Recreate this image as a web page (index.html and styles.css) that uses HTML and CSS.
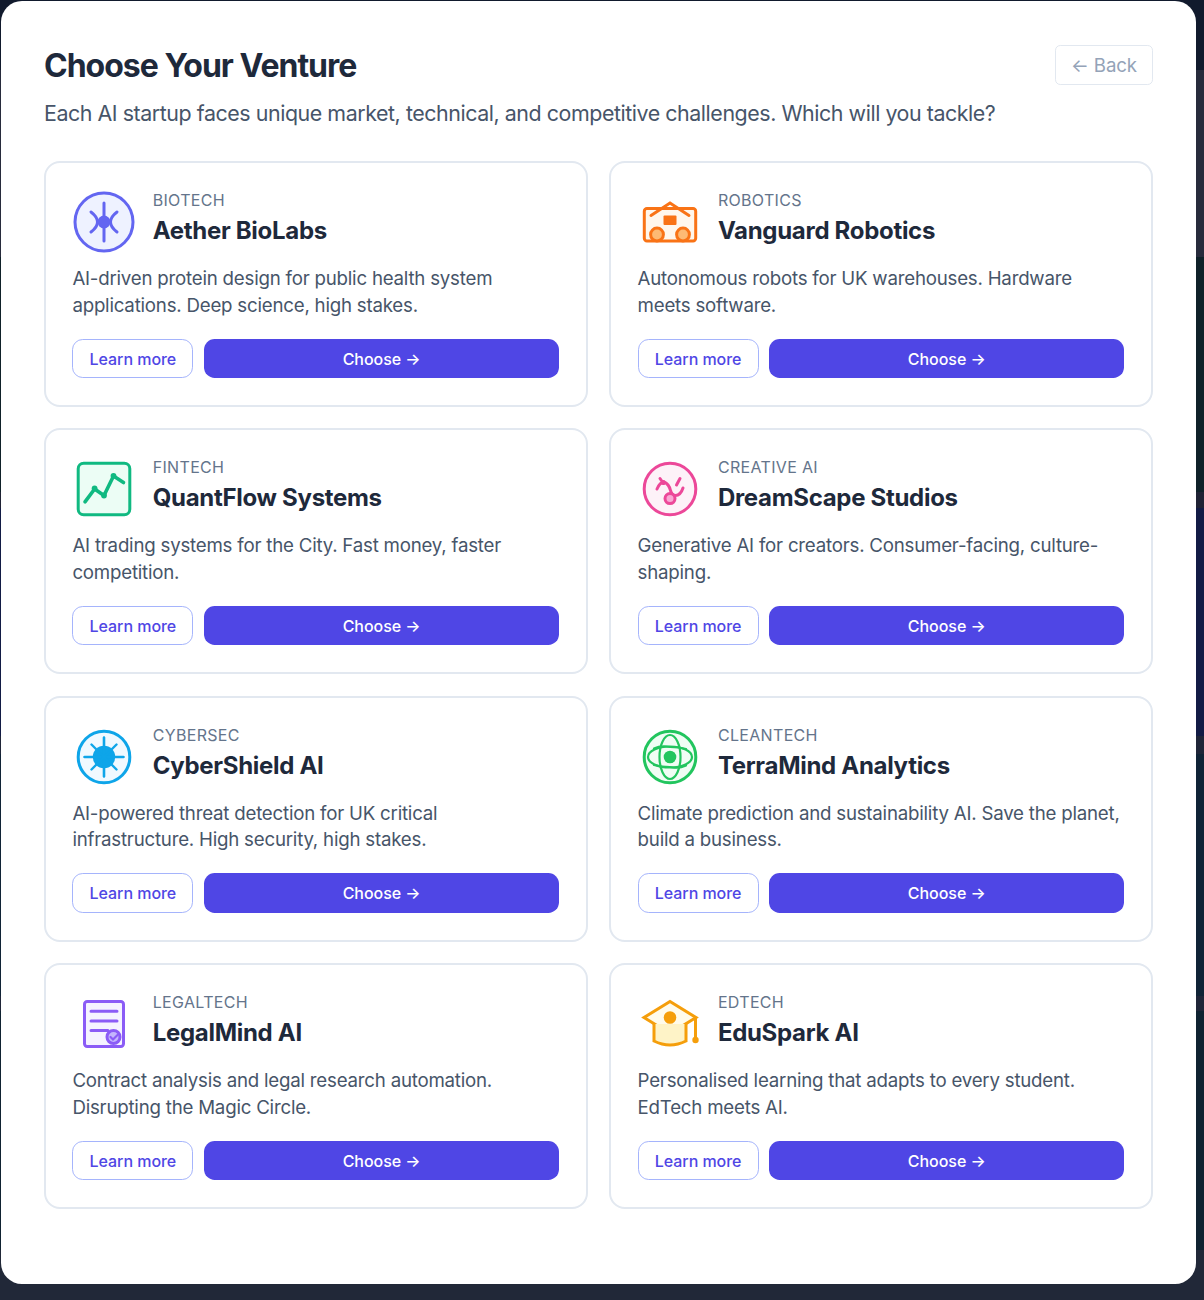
FILE: index.html
```html
<!DOCTYPE html>
<html lang="en">
<head>
    <meta charset="UTF-8">
    <meta name="viewport" content="width=device-width, initial-scale=1.0">
    <title>Choose Your Venture</title>
    <link rel="stylesheet" href="styles.css">
</head>
<body>
    <div class="modal">
        <div class="modal-header">
            <div>
                <h1>Choose Your Venture</h1>
                <p class="subtitle">Each AI startup faces unique market, technical, and competitive challenges. Which will you tackle?</p>
            </div>
            <button class="back">← Back</button>
        </div>

        <div class="ventures">
            <div class="card">
                <div class="card-head">
                    <svg class="logo" viewBox="0 0 64 64" fill="none" stroke="#6366f1" stroke-width="3" stroke-linecap="round">
                        <circle cx="32" cy="32" r="29" fill="#eef2ff"/>
                        <path d="M32 13v38M19 22q13 10 0 20M45 22q-13 10 0 20"/>
                        <circle cx="32" cy="32" r="6.4" fill="#6366f1" stroke="none"/>
                    </svg>
                    <div>
                        <div class="sector">BIOTECH</div>
                        <h2>Aether BioLabs</h2>
                    </div>
                </div>
                <p class="desc">AI-driven protein design for public health system applications. Deep science, high stakes.</p>
                <div class="actions">
                    <button class="learn">Learn more</button>
                    <button class="choose">Choose →</button>
                </div>
            </div>

            <div class="card">
                <div class="card-head">
                    <svg class="logo" viewBox="0 0 64 64" fill="none" stroke="#f97316" stroke-width="3" stroke-linecap="round">
                        <rect x="6.3" y="18.5" width="51.4" height="32.5" rx="2.7" fill="#fff7ed"/>
                        <circle cx="19" cy="44.500" r="6.4" fill="#fdba74"/>
                        <circle cx="45" cy="44.500" r="6.4" fill="#fdba74"/>
                        <path d="M13 25.500 32 13 51 25.500"/>
                        <rect x="25.5" y="25.5" width="13" height="9.5" rx="1" fill="#f97316" stroke="none"/>
                    </svg>
                    <div>
                        <div class="sector">ROBOTICS</div>
                        <h2>Vanguard Robotics</h2>
                    </div>
                </div>
                <p class="desc">Autonomous robots for UK warehouses. Hardware meets software.</p>
                <div class="actions">
                    <button class="learn">Learn more</button>
                    <button class="choose">Choose →</button>
                </div>
            </div>

            <div class="card">
                <div class="card-head">
                    <svg class="logo" viewBox="0 0 64 64" fill="none" stroke="#10b981" stroke-width="3">
                        <rect x="6.2" y="6.2" width="51.6" height="51.6" rx="5.5" fill="#ecfdf5"/>
                        <path d="M13 44.8 22.6 32 32 38.5 41.5 19 51.5 25.5" stroke-width="3.6" stroke-linecap="round" stroke-linejoin="round"/>
                        <g fill="#10b981" stroke="none">
                            <circle cx="22.6" cy="31.5" r="2.9"/>
                            <circle cx="32" cy="38.5" r="2.9"/>
                            <circle cx="41.5" cy="18.8" r="2.9"/>
                        </g>
                    </svg>
                    <div>
                        <div class="sector">FINTECH</div>
                        <h2>QuantFlow Systems</h2>
                    </div>
                </div>
                <p class="desc">AI trading systems for the City. Fast money, faster competition.</p>
                <div class="actions">
                    <button class="learn">Learn more</button>
                    <button class="choose">Choose →</button>
                </div>
            </div>

            <div class="card">
                <div class="card-head">
                    <svg class="logo" viewBox="0 0 64 64" fill="none" stroke="#ec4899" stroke-width="3">
                        <circle cx="32" cy="32" r="25.8" fill="#fdf2f8"/>
                        <path d="M19 32q3-7 7-7 5 2 6.5 8.5 1.5 5 5 5 5 0 7.5-7.5M22 21.500l3.500 5M42 21.500l-3.500 6.500" stroke-linecap="round"/>
                        <circle cx="25.2" cy="25.5" r="2.500" fill="#ec4899" stroke="none"/>
                        <circle cx="32" cy="41.6" r="5" fill="#f9a8d4"/>
                    </svg>
                    <div>
                        <div class="sector">CREATIVE AI</div>
                        <h2>DreamScape Studios</h2>
                    </div>
                </div>
                <p class="desc">Generative AI for creators. Consumer-facing, culture-shaping.</p>
                <div class="actions">
                    <button class="learn">Learn more</button>
                    <button class="choose">Choose →</button>
                </div>
            </div>

            <div class="card">
                <div class="card-head">
                    <svg class="logo" viewBox="0 0 64 64" fill="none" stroke="#0ea5e9" stroke-width="3" stroke-linecap="round">
                        <circle cx="32" cy="32" r="25.8" fill="#f0f9ff"/>
                        <circle cx="32" cy="32" r="11.200" fill="#0ea5e9" stroke="none"/>
                        <path d="M32 12.5v39M12.5 32h39" stroke-width="2.600"/>
                        <path d="M19.5 19.5l25 25M44.5 19.5l-25 25" stroke-width="2.400"/>
                    </svg>
                    <div>
                        <div class="sector">CYBERSEC</div>
                        <h2>CyberShield AI</h2>
                    </div>
                </div>
                <p class="desc">AI-powered threat detection for UK critical infrastructure. High security, high stakes.</p>
                <div class="actions">
                    <button class="learn">Learn more</button>
                    <button class="choose">Choose →</button>
                </div>
            </div>

            <div class="card">
                <div class="card-head">
                    <svg class="logo" viewBox="0 0 64 64" fill="none" stroke="#22c55e" stroke-width="2.2">
                        <circle cx="32" cy="32" r="25.8" fill="#f0fdf4" stroke-width="3"/>
                        <ellipse cx="32" cy="32" rx="10.5" ry="22"/>
                        <ellipse cx="32" cy="32" rx="22" ry="10.5"/>
                        <path d="M16 23.5q7-3.500 16-1.500 9 0 16 2M16 40q7 2 16 2 9 2 16-1.500" stroke-linecap="round"/>
                        <circle cx="32" cy="32" r="6.3" fill="#22c55e" stroke="none"/>
                    </svg>
                    <div>
                        <div class="sector">CLEANTECH</div>
                        <h2>TerraMind Analytics</h2>
                    </div>
                </div>
                <p class="desc">Climate prediction and sustainability AI. Save the planet, build a business.</p>
                <div class="actions">
                    <button class="learn">Learn more</button>
                    <button class="choose">Choose →</button>
                </div>
            </div>

            <div class="card">
                <div class="card-head">
                    <svg class="logo" viewBox="0 0 64 64" fill="none" stroke="#8b5cf6" stroke-width="3" stroke-linecap="round">
                        <rect x="12.5" y="9.5" width="39" height="45" rx="2.7" fill="#f5f3ff"/>
                        <path d="M19 19.2h26M19 29h26M19 38.5h17"/>
                        <circle cx="41.5" cy="45" r="6.5" fill="#c4b5fd"/>
                        <path d="M38.5 45l2.5 2.5 4.5-4.5" stroke-width="2.2"/>
                    </svg>
                    <div>
                        <div class="sector">LEGALTECH</div>
                        <h2>LegalMind AI</h2>
                    </div>
                </div>
                <p class="desc">Contract analysis and legal research automation. Disrupting the Magic Circle.</p>
                <div class="actions">
                    <button class="learn">Learn more</button>
                    <button class="choose">Choose →</button>
                </div>
            </div>

            <div class="card">
                <div class="card-head">
                    <svg class="logo" viewBox="0 0 64 64" fill="none" stroke="#f59e0b" stroke-width="3">
                        <path d="M32 9.5 58 25.5 32 41.5 6 25.5z" fill="#fffbeb"/>
                        <path d="M16 32v17q16 8 32 0V32z" fill="#fef3c7" stroke="none"/>
                        <path d="M16 31v18q16 8 32 0V31M57.5 25.5V47"/>
                        <circle cx="32" cy="25.5" r="6.3" fill="#f59e0b" stroke="none"/>
                        <circle cx="57.5" cy="48" r="3.2" fill="#f59e0b" stroke="none"/>
                    </svg>
                    <div>
                        <div class="sector">EDTECH</div>
                        <h2>EduSpark AI</h2>
                    </div>
                </div>
                <p class="desc">Personalised learning that adapts to every student. EdTech meets AI.</p>
                <div class="actions">
                    <button class="learn">Learn more</button>
                    <button class="choose">Choose →</button>
                </div>
            </div>
        </div>
    </div>
</body>
</html>
```
FILE: styles.css
```css
* {
    box-sizing: border-box;
}

body {
    margin: 0;
    padding: 1px 8px 16px 1px;
    height: 1300px;
    overflow: hidden;
    font-family: Inter, sans-serif;
    color: #1e293b;
    background: linear-gradient(#111a2d 70px, #272b3c 70px, #272b3c 257px, #0f2129 257px, #0f2129 492px, #1f2234 492px, #1f2234 508px, #121b45 508px, #121b45 736px, #1f2538 736px, #1f2538 754px, #102336 754px, #102336 996px, #1f2538 996px, #1f2538 1011px, #0f2231 1011px, #0f2231 1250px, #212838 1250px);
}

.modal {
    height: 1283px;
    padding: 43px;
    background: #fff;
    border-radius: 21px;
}

.modal-header {
    display: flex;
    justify-content: space-between;
    align-items: flex-start;
    height: 117.1px;
}

h1 {
    margin: 0;
    font-size: 32px;
    line-height: 43px;
    font-weight: 700;
    letter-spacing: -1px;
}

.subtitle {
    margin: 10px 0 0;
    font-size: 21.4px;
    line-height: 32px;
    letter-spacing: -0.44px;
    color: #475569;
    white-space: nowrap;
}

button {
    font-family: inherit;
    white-space: nowrap;
}

.back {
    flex: none;
    width: 98px;
    height: 40px;
    margin-top: 1px;
    padding: 0;
    font-size: 18.7px;
    letter-spacing: -0.15px;
    color: #94a3b8;
    background: #fff;
    border: 1px solid #e2e8f0;
    border-radius: 5.3px;
}

.ventures {
    display: grid;
    grid-template-columns: 1fr 1fr;
    gap: 21.4px;
}

.card {
    height: 245.9px;
    padding: 26.9px 26.7px 26.7px 26.4px;
    border: 2px solid #e2e8f0;
    border-radius: 16px;
}

.card-head {
    display: flex;
    gap: 16.3px;
    height: 64px;
}

.logo {
    flex: none;
    width: 64px;
    height: 64px;
}

.sector {
    font-size: 16px;
    line-height: 21px;
    letter-spacing: 0.33px;
    color: #64748b;
}

h2 {
    margin: 3px 0 0;
    font-size: 24px;
    line-height: 34px;
    font-weight: 700;
    letter-spacing: -0.3px;
}

.desc {
    margin: 12px 0 19.3px;
    font-size: 18.7px;
    line-height: 26.7px;
    letter-spacing: -0.22px;
    color: #475569;
}

.actions {
    display: flex;
    gap: 10.7px;
}

.actions button {
    height: 39.4px;
    padding: 1px 0 0;
    font-size: 16px;
    font-weight: 550;
    letter-spacing: -0.05px;
    border-radius: 10.7px;
}

.learn {
    width: 121px;
    color: #4f46e5;
    background: #fff;
    border: 1px solid #a5b4fc;
}

.choose {
    flex: 1;
    color: #fff;
    background: #4f46e5;
    border: none;
}
```
